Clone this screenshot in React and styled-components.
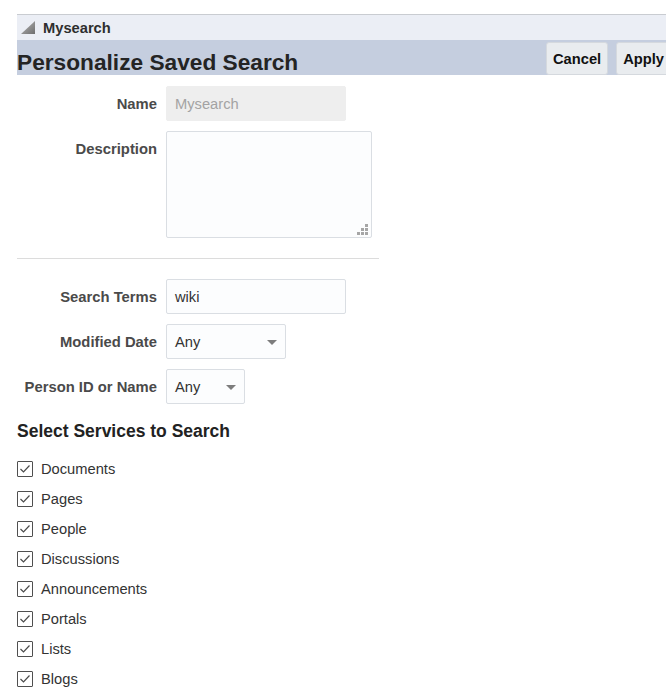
import React from 'react';
import styled, { createGlobalStyle } from 'styled-components';

const GlobalStyle = createGlobalStyle`
  body {
    margin: 0;
    background: #fff;
    font-family: "Liberation Sans", Arial, sans-serif;
    color: #333;
  }
`;

const Page = styled.div`
  width: 649px;
  padding: 14px 0 0 17px;
`;

const TopBar = styled.div`
  display: flex;
  align-items: center;
  gap: 8px;
  height: 25px;
  padding-left: 4px;
  border-top: 1px solid #c9ccd1;
  background: #ebeef5;
`;

const PanelName = styled.span`
  font-size: 14.7px;
  font-weight: bold;
  color: #2e2e2e;
`;

const TitleBar = styled.div`
  display: flex;
  align-items: flex-end;
  justify-content: space-between;
  height: 35px;
  background: #c5cedf;
  overflow: hidden;
`;

const Title = styled.h1`
  margin: 0;
  padding-bottom: 1px;
  font-size: 22.7px;
  line-height: 1;
  font-weight: bold;
  color: #242424;
`;

const ButtonGroup = styled.div`
  display: flex;
  gap: 8px;
  flex-shrink: 0;
  margin-right: -5px;
`;

const Button = styled.button`
  height: 33px;
  padding: 0 6px;
  border: 1px solid #d5d9de;
  border-radius: 3px;
  background: #e9ecef;
  font-family: inherit;
  font-size: 14.7px;
  font-weight: bold;
  color: #111;
`;

const Form = styled.div`
  margin-top: 11px;
`;

const FormRow = styled.div`
  display: grid;
  grid-template-columns: 140px auto;
  column-gap: 9px;
  align-items: start;
  margin-bottom: 10px;
`;

const Label = styled.label`
  height: 35px;
  text-align: right;
  line-height: 36px;
  font-size: 14.8px;
  font-weight: bold;
  color: #4a4a4a;
`;

const Field = styled.div`
  box-sizing: border-box;
  position: relative;
  display: flex;
  align-items: center;
  width: ${p => p.$width}px;
  height: ${p => p.$height || 35}px;
  padding: 0 8px;
  border: 1px solid ${p => (p.$disabled ? '#eeeeee' : '#dadee3')};
  border-radius: 2px;
  background: ${p => (p.$disabled ? '#eeeeee' : '#fcfdfe')};
  font-size: 14.7px;
  color: ${p => (p.$disabled ? '#a3a3a3' : '#333')};
`;

const Arrow = styled.span`
  position: absolute;
  right: 8px;
  top: 15px;
  width: 0;
  height: 0;
  border-left: 5px solid transparent;
  border-right: 5px solid transparent;
  border-top: 5px solid #7d7d7d;
`;

const Grip = styled.svg`
  position: absolute;
  right: 3px;
  bottom: 2px;
`;

const Separator = styled.hr`
  width: 362px;
  margin: 20px 0 20px;
  border: 0;
  border-top: 1px solid #dcdcdc;
`;

const SectionTitle = styled.h2`
  margin: 16px 0 12px;
  font-size: 17.5px;
  line-height: 22px;
  font-weight: bold;
  color: #222;
`;

const CheckList = styled.div`
  display: flex;
  flex-direction: column;
`;

const CheckRow = styled.div`
  display: flex;
  align-items: center;
  gap: 8px;
  height: 30px;
  font-size: 14.7px;
  color: #333;
`;

const Box = styled.span`
  box-sizing: border-box;
  display: flex;
  width: 16px;
  height: 16px;
  border: 1px solid #4f4f4f;
  border-radius: 1px;
  background: #fff;
`;

const services = [
  'Documents',
  'Pages',
  'People',
  'Discussions',
  'Announcements',
  'Portals',
  'Lists',
  'Blogs',
];

function Disclosure() {
  return (
    <svg width="14" height="13" viewBox="0 0 14 13">
      <defs>
        <linearGradient id="disc" x1="0" y1="0" x2="1" y2="1">
          <stop offset="0" stopColor="#b8b8b8" />
          <stop offset="1" stopColor="#6e6e6e" />
        </linearGradient>
      </defs>
      <polygon points="14,0 14,13 0,13" fill="url(#disc)" />
    </svg>
  );
}

function ResizeGrip() {
  const dots = [
    [8, 0], [4, 4], [8, 4], [0, 8], [4, 8], [8, 8],
  ];
  return (
    <Grip width="11" height="11" viewBox="0 0 11 11">
      {dots.map(([x, y], i) => (
        <rect key={i} x={x} y={y} width="3" height="3" fill="#a6a6a6" />
      ))}
    </Grip>
  );
}

function Checkbox() {
  return (
    <Box>
      <svg width="14" height="14" viewBox="0 0 14 14">
        <path d="M2.5 7 L5.5 10 L11.5 3.5" fill="none" stroke="#4a4a4a" strokeWidth="1.2" />
      </svg>
    </Box>
  );
}

export default function App() {
  return (
    <>
      <GlobalStyle />
      <Page>
        <TopBar>
          <Disclosure />
          <PanelName>Mysearch</PanelName>
        </TopBar>
        <TitleBar>
          <Title>Personalize Saved Search</Title>
          <ButtonGroup>
            <Button>Cancel</Button>
            <Button>Apply</Button>
          </ButtonGroup>
        </TitleBar>

        <Form>
          <FormRow>
            <Label>Name</Label>
            <Field $width={180} $disabled>Mysearch</Field>
          </FormRow>
          <FormRow>
            <Label>Description</Label>
            <Field $width={206} $height={107}>
              <ResizeGrip />
            </Field>
          </FormRow>

          <Separator />

          <FormRow>
            <Label>Search Terms</Label>
            <Field $width={180}>wiki</Field>
          </FormRow>
          <FormRow>
            <Label>Modified Date</Label>
            <Field $width={120}>
              Any
              <Arrow />
            </Field>
          </FormRow>
          <FormRow>
            <Label>Person ID or Name</Label>
            <Field $width={79}>
              Any
              <Arrow />
            </Field>
          </FormRow>
        </Form>

        <SectionTitle>Select Services to Search</SectionTitle>
        <CheckList>
          {services.map(name => (
            <CheckRow key={name}>
              <Checkbox />
              {name}
            </CheckRow>
          ))}
        </CheckList>
      </Page>
    </>
  );
}
